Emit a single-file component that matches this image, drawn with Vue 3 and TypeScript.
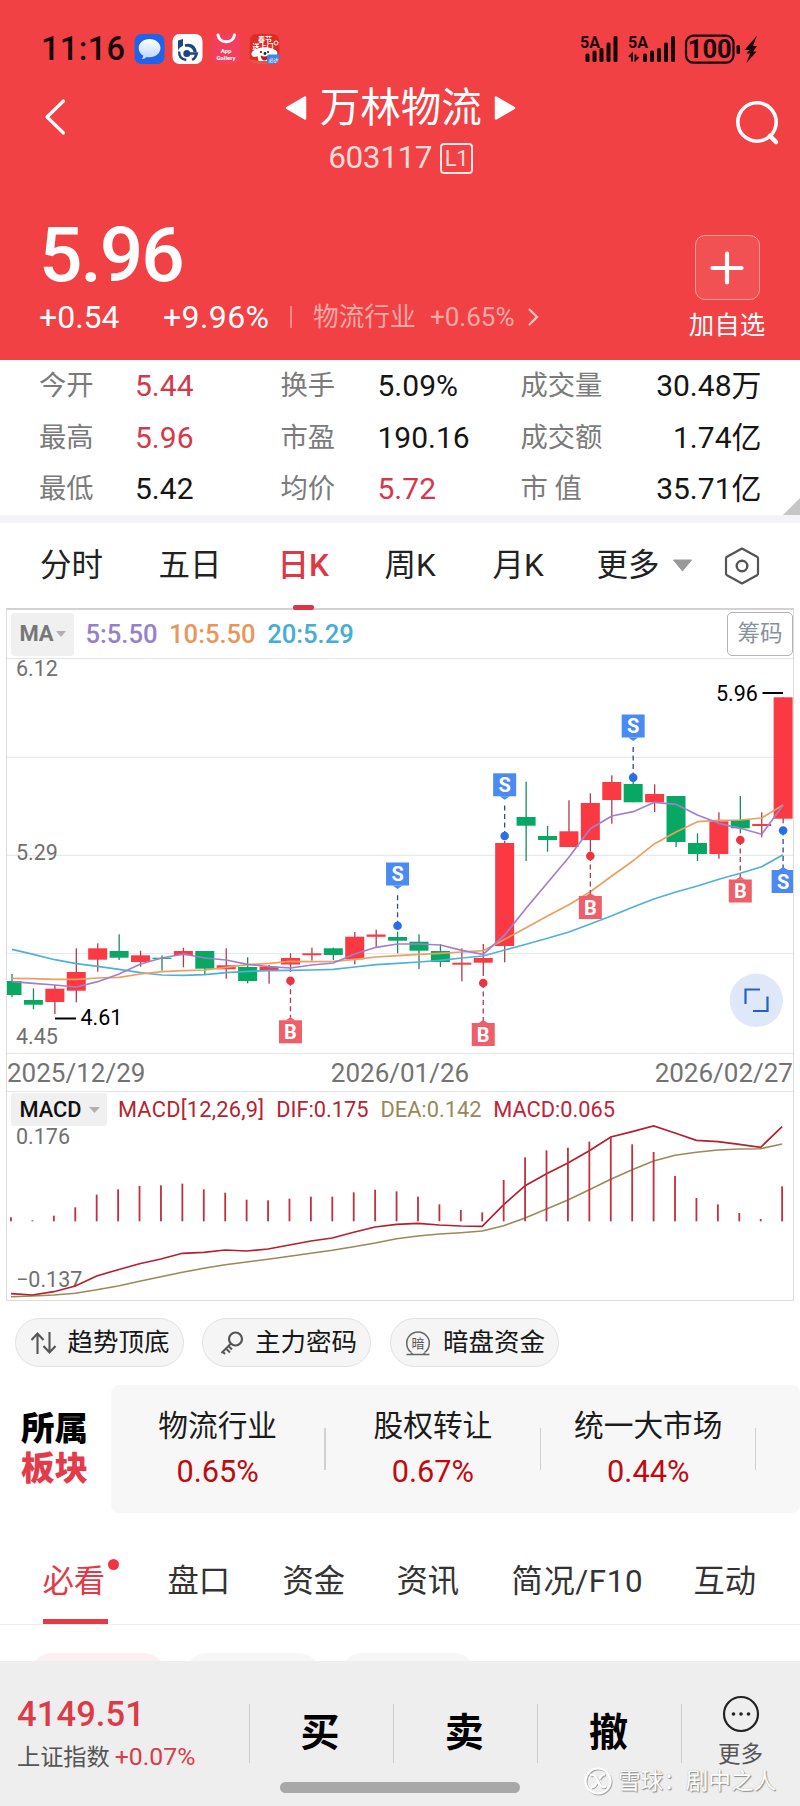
<script setup lang="ts">
type Candle = [up: 0 | 1, top: number, bottom: number, high: number, low: number]

const STEP = 21.42
const candleX = (i: number): number => 12 + i * STEP
const macdX = (i: number): number => 11 + i * STEP

const candles: Candle[] = [
  [0, 981, 995, 974, 997.3], [0, 1000, 1004.7, 988.3, 1009.3], [1, 988.7, 1002, 985, 1014],
  [1, 972, 990.7, 948.3, 1002.3], [1, 948.3, 959.7, 943.3, 971.7], [0, 951, 957.7, 934.3, 960],
  [1, 955.3, 962, 950.7, 966.7], [0, 957.7, 958.9, 955.3, 970.7], [1, 951, 955.3, 947.7, 967.3],
  [0, 951, 968.7, 951, 974], [1, 965.3, 969.3, 948.3, 978.7], [0, 967, 981, 957.3, 983.3],
  [1, 966.7, 970, 965, 983.7], [1, 958, 964.5, 953.3, 972], [1, 953.3, 955.2, 947.7, 960.7],
  [0, 948.3, 955, 947.7, 960], [1, 936.7, 959.3, 932, 964.3], [1, 934.5, 936.8, 929.7, 946.7],
  [0, 937, 940.7, 931.7, 953.3], [0, 941.7, 950.7, 934.3, 969], [0, 951, 962, 944, 967],
  [1, 962.7, 964.7, 948.3, 981.3], [1, 958, 962.7, 944, 976], [1, 843, 946, 841, 962.3],
  [0, 817, 825.7, 781.7, 861], [0, 836, 840, 826, 851.7], [1, 831.3, 847, 800.3, 847],
  [1, 803, 840, 793.3, 851.7], [1, 782, 800, 775.3, 823.7], [0, 784, 802.3, 781, 802.3],
  [1, 794, 802.3, 784.3, 812], [0, 796, 842, 796, 847], [0, 843, 854, 833.3, 861],
  [1, 821.3, 854, 812.3, 858.7], [0, 820, 828.3, 796, 833.3], [1, 824, 826, 812.3, 837.3],
  [1, 697.3, 818.7, 697.3, 823.3],
]
const fromLeft = (ys: number[]): number[] => ys.map((y) => 840 + y / 3)
const fromRight = (ys: number[]): number[] => ys.map((y) => 670 + y / 3)

const ma5 = [
  ...fromLeft([425, 430, 435, 441, 425, 402, 372, 354, 342, 354, 360, 373, 380, 384, 375, 369, 342, 322, 312]),
  ...fromRight([822, 825, 841, 853, 795, 715, 638, 562, 476, 438, 425, 397, 403, 435, 460, 475, 493, 405]),
]
const ma10 = [
  ...fromLeft([415, 416, 418, 418, 414, 412, 402, 395, 392, 390, 382, 374, 370, 364, 365, 364, 358, 351, 347]),
  ...fromRight([853, 850, 846, 842, 808, 773, 738, 704, 665, 618, 572, 521, 486, 455, 451, 450, 444, 405]),
]
const ma20 = [
  ...fromLeft([328, 343, 359, 371, 379, 388, 398, 405, 406, 404, 398, 394, 392, 391, 390, 388, 381, 374, 370]),
  ...fromRight([876, 871, 864, 858, 840, 823, 805, 786, 762, 737, 711, 686, 666, 648, 628, 610, 590, 554]),
]
const scaleMacd = (ys: number[]): number[] => ys.map((y) => 1080 + y / 3)
const bars = scaleMacd([
  412, 421, 407, 382, 344, 328, 318, 316, 311, 328, 338, 359, 361, 356, 350, 350, 337, 329, 334,
  350, 373, 390, 397, 300, 232, 211, 203, 185, 170, 193, 216, 288, 354, 373, 399, 417, 319,
])
const dif = scaleMacd([
  641, 645, 635, 618, 588, 569, 551, 537, 520, 517, 510, 513, 507, 495, 483, 474, 457, 441, 433,
  430, 435, 438, 439, 374, 317, 281, 249, 212, 171, 155, 138, 159, 181, 185, 193, 202, 140,
])
const dea = scaleMacd([
  650, 648, 645, 640, 629, 618, 604, 590, 577, 565, 554, 546, 538, 529, 520, 511, 500, 489, 476,
  468, 462, 458, 453, 437, 414, 387, 360, 329, 298, 269, 243, 226, 217, 210, 207, 206, 192,
])
const line = (ys: number[], x: (i: number) => number): string =>
  ys.map((y, i) => `${x(i).toFixed(1)},${y.toFixed(1)}`).join(' ')

interface Marker { i: number; kind: 'B' | 'S'; dot: number; box: number }
const markers: Marker[] = [
  { i: 13, kind: 'B', dot: 980.7, box: 1020.3 },
  { i: 18, kind: 'S', dot: 925.7, box: 862.5 },
  { i: 22, kind: 'B', dot: 983, box: 1023 },
  { i: 23, kind: 'S', dot: 836, box: 773.3 },
  { i: 27, kind: 'B', dot: 856, box: 896 },
  { i: 29, kind: 'S', dot: 777.6, box: 714.5 },
  { i: 34, kind: 'B', dot: 840, box: 879.5 },
  { i: 36, kind: 'S', dot: 830.5, box: 870 },
]
const below = (m: Marker): boolean => m.box > m.dot
const pointer = (m: Marker): string => {
  const x = candleX(m.i)
  return below(m)
    ? `${x - 5},${m.box + 0.3} ${x},${m.box - 3} ${x + 5},${m.box + 0.3}`
    : `${x - 5},${m.box + 23} ${x},${m.box + 26.5} ${x + 5},${m.box + 23}`
}

const stats = [
  ['今开', '5.44', true, '换手', '5.09%', false, '成交量', '30.48万'],
  ['最高', '5.96', true, '市盈', '190.16', false, '成交额', '1.74亿'],
  ['最低', '5.42', false, '均价', '5.72', true, '市 值', '35.71亿'],
] as const
const sectors = [
  { name: '物流行业', pct: '0.65%' },
  { name: '股权转让', pct: '0.67%' },
  { name: '统一大市场', pct: '0.44%' },
]
</script>

<template>
  <main class="screen">
    <header class="head">
      <div class="status">
        <span class="clock">11:16</span>
        <svg class="apps" width="148" height="32" viewBox="0 0 148 32">
          <defs>
            <linearGradient id="bub" x1="0" y1="0" x2="0" y2="1">
              <stop offset="0" stop-color="#fff" /><stop offset="1" stop-color="#b9d6fb" />
            </linearGradient>
            <clipPath id="dogClip"><rect x="115.500" y="1" width="30" height="30" rx="7" /></clipPath>
          </defs>
          <rect x="0.500" y="1" width="30" height="30" rx="7" fill="#1f63ea" />
          <path d="M15.500 6c6.200 0 11 4 11 9s-4.800 9.300-11 9.300c-1 0-2 0-2.800-.3-1.200 1.200-3 2-5 1.900 1.100-.9 1.500-2 1.400-3.300C6.300 21 4.700 18 4.700 15c0-5 4.600-9 10.800-9z" fill="url(#bub)" />
          <rect x="38.500" y="1" width="30" height="30" rx="7" fill="#fff" />
          <path d="M44 7.500l5-1.500v6.500q-3 1.500-5 5z" fill="#1b4583" />
          <path d="M50.500 11.500c6-2.500 12 1.500 12.200 7.500h-3.200c-.8-3.500-4-5.800-8-5z" fill="#1b4583" />
          <path d="M53 20.500h9.700c-.6 2.800-2 5-4.500 6.500" fill="none" stroke="#1b4583" stroke-width="2.600" />
          <path d="M45.300 18.500c-.7 4.500 2 8 7 8.500" fill="none" stroke="#1b4583" stroke-width="2.400" />
          <circle cx="52.800" cy="20.500" r="3.500" fill="#1b4583" />
          <path d="M79 1h27v23a7 7 0 0 1-7 7H85a7 7 0 0 1-7-7z" fill="#f43d65" opacity=".75" />
          <path d="M84 2c1.500 9 15 9 16.500 0" fill="none" stroke="#fff" stroke-width="3" stroke-linecap="round" />
          <text x="92" y="20" text-anchor="middle" class="tiny">App</text>
          <text x="92" y="26.500" text-anchor="middle" class="tiny">Gallery</text>
          <g clip-path="url(#dogClip)">
            <rect x="115.500" y="1" width="30" height="30" fill="#de2b24" />
            <text x="131" y="8.500" text-anchor="middle" class="fest">春节</text>
            <text x="129" y="15.500" text-anchor="middle" class="fest">送上门</text>
            <circle cx="142" cy="10" r="2" fill="none" stroke="#fff" />
            <path d="M118 23c-2-4 2-6 5-7 4-2.500 12-2.500 16 0 3 1 6 3 3.500 7-2 2-4 0-4 0l-1 5h-13l-1-5s-3 2-5.500 0z" fill="#fff" />
            <circle cx="127" cy="19" r="1" fill="#222" /><circle cx="134" cy="19" r="1" fill="#222" />
            <path d="M126.500 22.500q4 2 8 0 -1 5-4 5t-4-5z" fill="#c0181c" />
            <circle cx="131" cy="20.500" r="1.400" fill="#222" />
            <path d="M115 26l10 2 8 0v4h-18z" fill="#ef5140" />
            <rect x="133" y="21.500" width="14" height="11" rx="2" fill="#3f86e6" />
            <text x="139.500" y="28.500" text-anchor="middle" class="corner-text">必达</text>
          </g>
        </svg>
        <svg class="signals" width="180" height="32" viewBox="0 0 180 32">
          <g>
            <text x="0" y="15" class="net">5A</text>
            <rect x="5.500" y="20.500" width="4" height="8.500" rx="1.500" />
            <rect x="12.500" y="17.500" width="4" height="11.500" rx="1.500" />
            <rect x="19.500" y="15" width="4" height="14" rx="1.500" />
            <rect x="26.500" y="9.500" width="4" height="19.500" rx="1.500" />
            <rect x="33.500" y="3" width="4" height="26" rx="1.500" />
          </g>
          <g>
            <text x="48" y="15" class="net">5A</text>
            <path d="M49 24l3-3v7.500M58.500 24l-3 3v-5.500" fill="none" stroke="#160506" stroke-width="1.900" />
            <rect x="63" y="20.500" width="4" height="8.500" rx="1.500" />
            <rect x="70" y="17.500" width="4" height="11.500" rx="1.500" />
            <rect x="77" y="15" width="4" height="14" rx="1.500" />
            <rect x="84" y="9.500" width="4" height="19.500" rx="1.500" />
            <rect x="91" y="3" width="4" height="26" rx="1.500" />
          </g>
          <rect x="106" y="2.700" width="47.500" height="27" rx="7.500" fill="none" stroke="#160506" stroke-width="2.200" />
          <text x="129.700" y="24.800" text-anchor="middle" class="batt">100</text>
          <rect x="156.500" y="12" width="3.500" height="9" rx="1.500" />
          <path d="M177 2.500L164.500 17h5l-3 3.500 3.500 0-3.500 9.500L176.500 18.500h-3.500l4-5.500h-4z" />
        </svg>
      </div>

      <div class="nav">
        <svg width="24" height="38" viewBox="0 0 24 38"><path d="M20.500 3L4 19l16.500 16" fill="none" stroke="#fff" stroke-width="3.200" stroke-linecap="round" stroke-linejoin="round" /></svg>
        <div class="title">
          <h1>
            <svg width="22" height="26" viewBox="0 0 22 26"><path d="M2 13L20 2.500v21z" fill="#fff" stroke="#fff" stroke-width="2.500" stroke-linejoin="round" /></svg>
            <span>万林物流</span>
            <svg width="22" height="26" viewBox="0 0 22 26"><path d="M20 13L2 2.500v21z" fill="#fff" stroke="#fff" stroke-width="2.500" stroke-linejoin="round" /></svg>
          </h1>
          <p class="code">603117<span class="level">L1</span></p>
        </div>
        <svg width="46" height="46" viewBox="0 0 46 46" class="search"><circle cx="23" cy="22" r="19.200" fill="none" stroke="#fff" stroke-width="3.600" /><path d="M36 36l6 6" stroke="#fff" stroke-width="4.500" stroke-linecap="round" /></svg>
      </div>

      <div class="quote">
        <div class="figures">
          <strong>5.96</strong>
          <div class="change">
            <span class="abs">+0.54</span><span class="rel">+9.96%</span><i></i>
            <span class="ind">物流行业</span><span class="indpct">+0.65%</span>
            <svg width="12" height="20" viewBox="0 0 12 20"><path d="M2 2l8 8-8 8" fill="none" stroke="#ffc4c2" stroke-width="2.400" /></svg>
          </div>
        </div>
        <div class="add">
          <span class="plus"><svg width="34" height="34" viewBox="0 0 34 34"><path d="M17 2.500v29M2.500 17h29" stroke="#fff" stroke-width="4.200" stroke-linecap="round" /></svg></span>
          <span>加自选</span>
        </div>
      </div>
    </header>

    <section class="stats">
      <div v-for="r in stats" :key="r[0]" class="stat">
        <label>{{ r[0] }}</label><b :class="{ up: r[2] }">{{ r[1] }}</b>
        <label>{{ r[3] }}</label><b :class="{ up: r[5] }">{{ r[4] }}</b>
        <label>{{ r[6] }}</label><b class="end">{{ r[7] }}</b>
      </div>
      <svg class="fold" width="17" height="17" viewBox="0 0 17 17"><path d="M17 0v17H0z" fill="#c6c6c6" /></svg>
    </section>

    <nav class="periods">
      <span class="t1">分时</span><span class="t2">五日</span><span class="t3 on">日K</span><span class="t4">周K</span><span class="t5">月K</span>
      <span class="t6">更多<svg width="21" height="13" viewBox="0 0 21 13"><path d="M1.500 1h18l-9 11z" fill="#999" stroke="#999" stroke-linejoin="round" /></svg></span>
      <svg class="hex" width="36" height="40" viewBox="0 0 36 40"><path d="M18 2.500l15 8.300a2 2 0 0 1 1 1.700v15a2 2 0 0 1-1 1.700L18 37.500 3 29.200a2 2 0 0 1-1-1.700v-15a2 2 0 0 1 1-1.700z" fill="none" stroke="#555" stroke-width="2.200" stroke-linejoin="round" /><circle cx="18" cy="20" r="5.300" fill="none" stroke="#555" stroke-width="2.400" /></svg>
    </nav>

    <section class="chart">
      <div class="ma">
        <span class="pick">MA<svg width="10" height="6" viewBox="0 0 10 6"><path d="M0 0h10L5 6z" fill="#b0b0b0" /></svg></span>
        <span class="c5">5:5.50</span><span class="c10">10:5.50</span><span class="c20">20:5.29</span>
        <span class="chip-btn">筹码</span>
      </div>
      <svg class="plot" width="786" height="394" viewBox="7 659 786 394">
        <g stroke="#e9e9e9" stroke-width="1.200">
          <path d="M6 757.300H793M6 855.400H793M6 953.500H793" />
        </g>
        <g class="axis">
          <text x="16" y="676">6.12</text><text x="16" y="860">5.29</text><text x="16" y="1043.500">4.45</text>
        </g>
        <g v-for="(c, i) in candles" :key="i" :fill="c[0] ? '#fa3943' : '#06a863'">
          <rect :x="candleX(i) - 0.6" :y="c[3]" width="1.3" :height="c[4] - c[3]" :fill="c[0] ? '#b23a50' : '#1b8a5c'" />
          <rect :x="candleX(i) - 9.5" :y="c[1]" width="19" :height="c[2] - c[1]" />
        </g>
        <g fill="none" stroke-width="1.700" stroke-linejoin="round">
          <polyline :points="line(ma20, candleX)" stroke="#4fb1d8" />
          <polyline :points="line(ma10, candleX)" stroke="#ec9f5f" />
          <polyline :points="line(ma5, candleX)" stroke="#a27fce" />
        </g>
        <path d="M55 1018.500H76M762.500 693H783" stroke="#000" stroke-width="2.200" />
        <g class="axis dark"><text x="80.500" y="1025">4.61</text><text x="716" y="701">5.96</text></g>
        <g v-for="m in markers" :key="m.i" :class="m.kind">
          <line :x1="candleX(m.i)" :x2="candleX(m.i)" :y1="m.dot" :y2="below(m) ? m.box - 2 : m.box + 30" stroke-width="1.300" stroke-dasharray="5 3.500" />
          <circle :cx="candleX(m.i)" :cy="m.dot" r="4.300" />
          <rect :x="candleX(m.i) - 11.5" :y="m.box" width="23" height="23" class="flag" />
          <polygon :points="pointer(m)" class="flag" />
          <text :x="candleX(m.i)" :y="m.box + 18.6" text-anchor="middle">{{ m.kind }}</text>
        </g>
        <circle cx="756.300" cy="1000.300" r="26.700" fill="#dfe8f9" />
        <path d="M760 989.500H745.500v14.500M767.500 996.500v14.500H753" fill="none" stroke="#2262c6" stroke-width="2.200" />
      </svg>
      <div class="dates"><span>2025/12/29</span><span>2026/01/26</span><span>2026/02/27</span></div>
      <div class="macd-head">
        <span class="pick2">MACD<svg width="11" height="6" viewBox="0 0 11 6"><path d="M0 0h11L5.500 6z" fill="#b0b0b0" /></svg></span>
        <span class="params">MACD[12,26,9]</span><span>DIF:0.175</span><span class="olive">DEA:0.142</span><span class="crimson">MACD:0.065</span>
      </div>
      <svg class="plot" width="786" height="173" viewBox="7 1127 786 173">
        <g class="axis"><text x="16" y="1143.500">0.176</text><text x="16" y="1287">−0.137</text></g>
        <polyline :points="line(dea, macdX)" fill="none" stroke="#9a8959" stroke-width="1.600" />
        <polyline :points="line(dif, macdX)" fill="none" stroke="#b3202e" stroke-width="1.700" />
        <rect v-for="(y, i) in bars" :key="i" :x="macdX(i) - 0.9" :y="y" width="1.800" :height="1221.300 - y" fill="#c0303d" />
      </svg>
    </section>

    <div class="tools">
      <span><svg width="28" height="24" viewBox="0 0 28 24"><path d="M7.500 23V3M1.500 9l6-6.500 6 6.500M19.500 1v20M13.500 15l6 6.500 6-6.500" fill="none" stroke="#555" stroke-width="2.100" /></svg><b>趋势顶底</b></span>
      <span><svg width="28" height="26" viewBox="0 0 28 26"><circle cx="16.500" cy="9" r="6.500" fill="none" stroke="#555" stroke-width="2.200" /><path d="M12 13.500L2.500 23M7 18.500l4 4M3.500 21.500l2.500 2.500M9.500 16l3.500 3.500" fill="none" stroke="#555" stroke-width="2" /></svg><b>主力密码</b></span>
      <span><svg width="28" height="28" viewBox="0 0 28 28"><path d="M7.500 23.500a11.300 11.300 0 1 1 13 0M2.500 25.500h4l2-1.500M25.500 25.500h-4l-2-1.500M7 25.500h14" fill="none" stroke="#666" stroke-width="1.500" /><text x="14" y="18.800" text-anchor="middle" class="dark-mark">暗</text></svg><b>暗盘资金</b></span>
    </div>

    <section class="sector">
      <h2><span>所属</span><em>板块</em></h2>
      <div class="panel">
        <div v-for="s in sectors" :key="s.name" class="sec"><span>{{ s.name }}</span><b>{{ s.pct }}</b></div>
      </div>
    </section>

    <nav class="pages">
      <span class="p1 on">必看<i></i></span><span class="p2">盘口</span><span class="p3">资金</span><span class="p4">资讯</span><span class="p5">简况/F10</span><span class="p6">互动</span>
    </nav>
    <div class="peek"><i class="pink"></i><i></i><i></i></div>

    <footer class="foot">
      <div class="index"><b>4149.51</b><p>上证指数<em>+0.07%</em></p></div>
      <span class="act">买</span><span class="act">卖</span><span class="act">撤</span>
      <div class="more">
        <svg width="38" height="38" viewBox="0 0 38 38"><circle cx="19" cy="19" r="17" fill="none" stroke="#222" stroke-width="2.200" /><g fill="#222"><circle cx="11.500" cy="19" r="1.800" /><circle cx="19" cy="19" r="1.800" /><circle cx="26.500" cy="19" r="1.800" /></g></svg>
        <span>更多</span>
      </div>
      <i class="home"></i>
      <div class="mark">
        <svg width="30" height="30" viewBox="0 0 30 30">
          <g fill="none" stroke="#a5a5a5" stroke-width="2" transform="translate(1 1)"><circle cx="14" cy="14" r="12.500" /><path d="M6 8.500c4-2 6 1 8 5.500s4 7.500 8 5.500M21 7.500c-3 0-4.500 2.500-5.500 4.500M7 20.500c3 0 4.500-2 5.500-4.500" /></g>
          <g fill="none" stroke="#fff" stroke-width="2.200"><circle cx="14" cy="14" r="12.500" /><path d="M6 8.500c4-2 6 1 8 5.500s4 7.500 8 5.500M21 7.500c-3 0-4.500 2.500-5.500 4.500M7 20.500c3 0 4.500-2 5.500-4.500" /></g>
        </svg>
        <span>雪球：剧中之人</span>
      </div>
    </footer>
  </main>
</template>

<style>
body { background: #fff; }
</style>

<style scoped>
* { box-sizing: border-box; margin: 0; padding: 0; font-style: normal; }
svg { display: block; flex: none; }
.screen { position: relative; width: 800px; height: 1806px; overflow: hidden; background: #fff; font-family: Roboto, "Noto Sans CJK SC", sans-serif; color: #151515; white-space: nowrap; }
.head { height: 360px; background: #f14144; color: #fff; }
.status { display: flex; align-items: center; height: 98px; padding: 0 42px 0 41px; }
.clock { width: 92.500px; font-size: 32.500px; font-weight: 500; line-height: 40px; letter-spacing: .4px; color: #160506; }
.signals { margin-left: auto; fill: #160506; width: 180px; margin-right: -2px; }
.net { font-size: 16px; font-weight: 700; }
.batt { font-size: 25.500px; font-weight: 700; }
.tiny { font-size: 6px; font-weight: 700; fill: #fff; }
.fest { font-size: 7px; font-weight: 700; fill: #fff; }
.corner-text { font-size: 5px; fill: #fff; }
.nav { display: flex; justify-content: space-between; align-items: flex-start; height: 120px; padding: 0 20px 0 42.500px; }
.title { width: 231px; margin-left: 1px; margin-top: -15px; }
.search { margin-top: 2px; }
.title h1 { display: flex; align-items: center; justify-content: space-between; height: 50px; font-size: 40.500px; font-weight: 400; line-height: 50px; }
.code { display: flex; align-items: center; padding-left: 43px; gap: 8px; height: 50px; font-size: 31.500px; line-height: 54px; letter-spacing: -.4px; color: #ffdcd9; }
.level { width: 33px; height: 31px; border: 2px solid #ffe8e6; border-radius: 4px; font-size: 22px; line-height: 28px; text-align: center; }
.quote { display: flex; justify-content: space-between; padding: 0 34px 0 39px; }
.figures strong { display: block; height: 72px; font-size: 76.500px; font-weight: 500; line-height: 75px; letter-spacing: -2px; }
.change { display: flex; align-items: center; height: 40px; margin-top: 7px; line-height: 40px; font-size: 32px; }
.abs { width: 124px; }
.rel { width: 127px; letter-spacing: .4px; }
.change i { width: 1.500px; height: 22px; background: #f98b8a; margin-right: 21.500px; }
.ind { width: 117px; font-size: 25.700px; color: #fbaaa8; }
.indpct { width: 97px; font-size: 26px; color: #fbaaa8; }
.add { display: flex; flex-direction: column; align-items: center; width: 78px; padding-top: 17px; font-size: 25.500px; line-height: 36px; }
.plus { display: grid; place-items: center; width: 65px; height: 65px; margin-bottom: 7px; border: 1.500px solid #f9a09f; border-radius: 10px; background: #f25153; }

.stats { position: relative; height: 163px; border-bottom: 8px solid #f3f3f8; }
.stat { display: grid; grid-template-columns: 96px 145.500px 97px 143px 80px 1fr; height: 51.500px; padding: 0 38.500px 0 39px; line-height: 51.500px; }
.stat label { padding-top: 1px; font-size: 27.300px; color: #7b7b7b; }
.stat b { font-size: 30px; font-weight: 400; color: #151515; }
.stat b.up { color: #d5384a; }
.stat .end { text-align: right; }
.fold { position: absolute; right: 0; bottom: 0; }

.periods { display: flex; align-items: center; height: 85px; padding: 0 0 0 40px; font-size: 31.500px; color: #222; }
.periods span { line-height: 44px; }
.t1 { width: 118.500px; }
.t2 { width: 119px; }
.t3 { width: 107px; }
.t4 { width: 108px; }
.t5 { width: 104px; }
.t6 { display: flex; align-items: center; gap: 12px; width: 127px; }
.t3.on { position: relative; color: #dd3846; font-weight: 500; }
.t3.on::after { content: ""; position: absolute; left: 15px; bottom: -22px; width: 21px; height: 5px; border-radius: 2px; background: #dc3545; }

.chart { width: 788px; height: 693px; margin-left: 6px; border: 1px solid #dcdcdc; border-top: 2px solid #d2d2d2; }
.ma { display: flex; align-items: center; height: 49px; padding: 0 0 0 4px; gap: 12.500px; border-bottom: 1px solid #e4e4e4; font-size: 25.600px; font-weight: 500; line-height: 30px; }
.pick { display: flex; align-items: center; justify-content: center; gap: 2px; width: 63px; height: 43px; border-radius: 4px; background: #f0f0f0; font-size: 22px; font-weight: 700; color: #777; }
.c5 { margin-left: -1px; color: #9780cb; }
.c10 { margin-left: -1px; color: #e8975a; }
.c20 { margin-left: -1px; color: #45add6; }
.chip-btn { margin-left: auto; width: 66px; height: 44px; border: 1.500px solid #b4b4b8; border-radius: 5px; font-size: 22.500px; font-weight: 400; line-height: 40px; text-align: center; color: #8b90a0; }
.plot { display: block; width: 786px; overflow: visible; clip-path: inset(-6px 0); }
.axis { font-size: 21.500px; fill: #707070; }
.axis.dark { fill: #000; }
.B { fill: #ec3340; stroke: none; }
.S { fill: #2a6fe8; stroke: none; }
.B line { stroke: #b23a50; }
.S line { stroke: #304e80; }
.B .flag { fill: #ee5f69; }
.S .flag { fill: #4b8bf1; }
.B text, .S text { fill: #fff; font-size: 20px; font-weight: 700; }
.dates { display: flex; justify-content: space-between; height: 39px; border-top: 1px solid #e4e4e4; border-bottom: 1px solid #e4e4e4; font-size: 26px; line-height: 38px; color: #737373; }
.macd-head { display: flex; align-items: center; height: 35px; padding-left: 4px; gap: 11.900px; font-size: 21.800px; line-height: 34px; color: #b5232f; }
.params { margin-left: -1px; letter-spacing: .25px; }
.pick2 { display: flex; align-items: center; gap: 7px; width: 96px; height: 33px; padding-left: 8.500px; border-radius: 3px; background: #f0f0f0; font-size: 21.800px; font-weight: 500; color: #111; }
.olive { color: #97895a; }
.crimson { color: #c02438; }

.tools { display: flex; gap: 18.500px; padding: 17px 15px 0 14.500px; height: 84px; }
.tools span { display: flex; align-items: center; gap: 9.500px; width: 169px; height: 49px; padding-left: 14.500px; border: 1.500px solid #e1e1e1; border-radius: 25px; background: #f5f5f5; font-size: 25.500px; color: #171717; }
.tools b { font-weight: 400; line-height: 36px; margin-top: -1px; }
.tools span:nth-child(2) { gap: 8.500px; padding-left: 15.500px; }
.tools span:nth-child(3) { gap: 11px; padding-left: 13.500px; }
.dark-mark { font-size: 13px; fill: #555; }

.sector { display: flex; height: 128px; }
.sector h2 { display: flex; flex-direction: column; width: 110.500px; padding: 24px 0 0 21px; font-size: 33.500px; font-weight: 900; line-height: 40px; color: #000; }
.sector em { color: #e43b4a; }
.panel { display: flex; width: 689.500px; height: 128px; border-radius: 8px; background: #f7f7f7; }
.sec { display: flex; flex-direction: column; align-items: center; justify-content: center; position: relative; width: 215.300px; padding-right: 1px; line-height: 46px; font-size: 29.700px; color: #1b1b1b; }
.sec b { font-size: 30.700px; font-weight: 400; color: #c00a10; }
.sec::after { content: ""; position: absolute; right: 0; top: 43px; width: 1.500px; height: 42px; background: #d0d0d0; }

.pages { display: flex; align-items: center; height: 112px; padding: 27px 0 0 42.500px; border-bottom: 1.500px solid #ededed; font-size: 31.300px; line-height: 44px; color: #333; }
.p1 { position: relative; width: 125px; }
.p1.on { color: #e03a49; }
.p1 i { position: absolute; left: 65px; top: -1px; width: 11px; height: 11px; border-radius: 50%; background: #f13343; }
.p1::after { content: ""; position: absolute; left: 0; bottom: -20px; width: 65px; height: 5px; background: #e33a46; }
.p2 { width: 115px; }
.p3 { width: 114px; }
.p4 { width: 115px; }
.p5 { width: 182px; letter-spacing: .6px; }
.peek { display: flex; gap: 19px; height: 36px; padding: 28px 30px 0; overflow: hidden; }
.peek i { flex: none; width: 136px; height: 44px; border-radius: 22px; background: #f7f7f7; }
.peek .pink { background: #fdf0f2; }

.foot { position: relative; display: flex; height: 145px; background: #eee; }
.index { width: 248.500px; padding: 31px 0 0 17px; }
.index b { display: block; font-size: 34.500px; font-weight: 500; line-height: 44px; letter-spacing: .1px; color: #dc3b49; }
.index p { font-size: 23.200px; line-height: 42px; color: #555; }
.index em { margin-left: 5px; font-size: 24.800px; color: #dc3b49; }
.act { width: 144.200px; height: 59px; margin-top: 43px; padding-right: 2px; border-left: 1.500px solid #ccc; font-size: 39px; font-weight: 600; line-height: 58px; text-align: center; color: #000; }
.more { display: flex; flex-direction: column; align-items: center; width: 118px; height: 59px; margin-top: 43px; border-left: 1.500px solid #ccc; font-size: 22.500px; line-height: 30px; color: #555; }
.more svg { margin-top: -9px; }
.more span { margin-top: 6px; }
.home { position: absolute; left: 280px; bottom: 13px; width: 240px; height: 11px; border-radius: 6px; background: #a8a8a8; }
.mark { position: absolute; left: 584px; top: 106px; display: flex; align-items: center; gap: 4px; height: 30px; font-size: 22.600px; line-height: 30px; color: #fff; text-shadow: 1px 1px 1px #888, 0 0 1px #aaa; }
</style>
